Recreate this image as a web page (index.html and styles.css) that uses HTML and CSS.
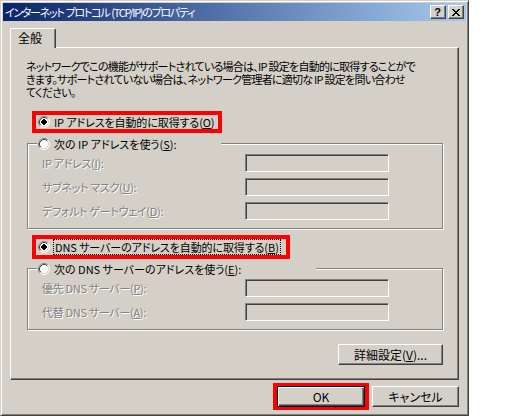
FILE: index.html
```html
<!DOCTYPE html>
<html lang="ja">
<head>
<meta charset="utf-8">
<title>インターネット プロトコル (TCP/IP)のプロパティ</title>
<link rel="stylesheet" href="styles.css">
</head>
<body>
<svg class="defs" width="0" height="0" aria-hidden="true">
  <defs>
    <symbol id="radio-off" viewBox="0 0 12 12">
      <circle cx="6" cy="6" r="5" fill="#fff"/>
      <path d="M2.11 9.89A5.5 5.5 0 0 1 9.89 2.11" fill="none" stroke="#808080"/>
      <path d="M9.89 2.11A5.5 5.5 0 0 1 2.11 9.89" fill="none" stroke="#fff"/>
      <path d="M2.82 9.18A4.5 4.5 0 0 1 9.18 2.82" fill="none" stroke="#404040"/>
      <path d="M9.18 2.82A4.5 4.5 0 0 1 2.82 9.18" fill="none" stroke="#d4d0c8"/>
    </symbol>
    <symbol id="radio-on" viewBox="0 0 12 12">
      <use href="#radio-off"/>
      <rect x="4" y="4" width="4" height="4" fill="#000"/>
      <rect x="5" y="3" width="2" height="6" fill="#000"/>
      <rect x="3" y="5" width="6" height="2" fill="#000"/>
    </symbol>
  </defs>
</svg>

<div class="dialog">
  <div class="titlebar">
    <span class="title">インターネット プロトコル (TCP/IP)のプロパティ</span>
    <div class="caption-buttons">
      <span class="cap-btn help">?</span>
      <span class="cap-btn close">
        <svg width="8" height="7" viewBox="0 0 8 7" shape-rendering="crispEdges"><path d="M0 0h2v1h-2z M6 0h2v1h-2z M1 1h2v1h-2z M5 1h2v1h-2z M2 2h4v1h-4z M3 3h2v1h-2z M2 4h4v1h-4z M1 5h2v1h-2z M5 5h2v1h-2z M0 6h2v1h-2z M6 6h2v1h-2z" fill="#000"/></svg>
      </span>
    </div>
  </div>

  <div class="content">
    <div class="tabs">
      <div class="tab">全般</div>
    </div>

    <div class="panel">
      <p class="desc">ネットワークでこの機能がサポートされている場合は、IP 設定を自動的に取得することがで<br>きます。サポートされていない場合は、ネットワーク管理者に適切な IP 設定を問い合わせ<br>てください。</p>

      <div class="mark mark-ip">
        <svg class="radio" width="12" height="12"><use href="#radio-on"/></svg>
        <span class="opt">IP アドレスを自動的に取得する(<u>O</u>)</span>
      </div>

      <div class="group group-ip">
        <div class="legend legend-ip">
          <svg class="radio" width="12" height="12"><use href="#radio-off"/></svg>
          <span>次の IP アドレスを使う(<u>S</u>):</span>
        </div>
        <div class="fields">
          <div class="field"><span class="lbl">IP アドレス(<u>I</u>):</span><span class="input"></span></div>
          <div class="field"><span class="lbl">サブネット マスク(<u>U</u>):</span><span class="input"></span></div>
          <div class="field"><span class="lbl">デフォルト ゲートウェイ(<u>D</u>):</span><span class="input"></span></div>
        </div>
      </div>

      <div class="mark mark-dns">
        <svg class="radio" width="12" height="12"><use href="#radio-on"/></svg>
        <span class="opt focus">DNS サーバーのアドレスを自動的に取得する(<u>B</u>)</span>
      </div>

      <div class="group group-dns">
        <div class="legend legend-dns">
          <svg class="radio" width="12" height="12"><use href="#radio-off"/></svg>
          <span>次の DNS サーバーのアドレスを使う(<u>E</u>):</span>
        </div>
        <div class="fields">
          <div class="field"><span class="lbl">優先 DNS サーバー(<u>P</u>):</span><span class="input"></span></div>
          <div class="field"><span class="lbl">代替 DNS サーバー(<u>A</u>):</span><span class="input"></span></div>
        </div>
      </div>

      <button class="btn adv">詳細設定(<u>V</u>)...</button>
    </div>

    <div class="footer">
      <span class="ok-mark"><button class="btn default">OK</button></span>
      <button class="btn cancel">キャンセル</button>
    </div>
  </div>
</div>
</body>
</html>
```

FILE: styles.css
```css
* {
  box-sizing: border-box;
}

html,
body {
  margin: 0;
  background: #fff;
}

body {
  font-family: "Noto Sans CJK JP", "Noto Sans", sans-serif;
  font-size: 11px;
  color: #000;
  font-feature-settings: "palt";
}

.defs {
  position: absolute;
  width: 0;
  height: 0;
  overflow: hidden;
}

.dialog {
  width: 469px;
  height: 416px;
  background: #d4d0c8;
  border: 1px solid;
  border-color: #d4d0c8 #404040 #404040 #d4d0c8;
  box-shadow: inset 1px 1px 0 #fff, inset -1px -1px 0 #808080;
  padding: 2px;
  display: flex;
  flex-direction: column;
}

/* title bar */
.titlebar {
  height: 18px;
  background: linear-gradient(to right, #0a246a, #a6caf0);
  display: flex;
  align-items: center;
  justify-content: space-between;
  padding: 0 2px 0 2px;
}

.title {
  color: #fff;
  font-size: 11px;
  letter-spacing: -1.3px;
  word-spacing: 1px;
  line-height: 14px;
  white-space: nowrap;
}

.caption-buttons {
  display: flex;
  gap: 2px;
}

.cap-btn {
  width: 16px;
  height: 14px;
  background: #d4d0c8;
  border: 1px solid;
  border-color: #fff #404040 #404040 #fff;
  box-shadow: inset -1px -1px 0 #808080;
  display: flex;
  align-items: center;
  justify-content: center;
}

.cap-btn.help {
  font-family: "Liberation Sans", sans-serif;
  font-weight: bold;
  font-size: 11px;
  line-height: 1;
  padding-right: 1px;
}

.cap-btn.close svg {
  display: block;
  margin-top: 1px;
}

/* content */
.content {
  padding: 0 7px;
  display: flex;
  flex-direction: column;
}

.tabs {
  display: flex;
  margin-top: 7px;
}

.tab {
  position: relative;
  z-index: 1;
  width: 46px;
  height: 20px;
  margin-bottom: -1px;
  background: #d4d0c8;
  border-top: 1px solid #fff;
  border-left: 1px solid #fff;
  border-right: 1px solid #404040;
  box-shadow: inset -1px 0 0 #808080;
  border-radius: 2px 2px 0 0;
  padding: 2px 0 0 7px;
  font-size: 12px;
  line-height: 14px;
}

.panel {
  height: 333px;
  border: 1px solid;
  border-color: #fff #404040 #404040 #fff;
  box-shadow: inset -1px -1px 0 #808080;
  padding: 12px 15px 0 15px;
  display: flex;
  flex-direction: column;
  align-items: flex-start;
}

.desc {
  margin: 0;
  line-height: 13px;
  letter-spacing: -0.75px;
  white-space: nowrap;
}

.radio {
  display: block;
  flex: none;
}

/* red annotation boxes */
.mark {
  border: 4px solid #f00;
  display: flex;
  align-items: center;
  gap: 4px;
  padding-left: 2px;
  margin-left: 6px;
  white-space: nowrap;
}

.mark-ip {
  margin-top: 12px;
  width: 190px;
  height: 22px;
}

.mark-dns {
  margin-top: 6px;
  width: 258px;
  height: 24px;
  gap: 3px;
}

.opt {
  line-height: 14px;
  letter-spacing: -0.1px;
}

.opt.focus {
  border: 1px dotted #000;
  padding: 0 1px;
  line-height: 14px;
}

/* group boxes */
.group {
  align-self: stretch;
  margin-left: 1px;
  border: 1px solid #808080;
  box-shadow: inset 1px 1px 0 #fff, 1px 1px 0 #fff;
  padding: 0 0 8px 14px;
  display: flex;
  flex-direction: column;
}

.group-ip {
  margin-top: 10px;
}

.group-dns {
  margin-top: 9px;
}

.legend {
  height: 16px;
  margin-top: -8px;
  margin-left: -5px;
  padding-left: 1px;
  background: #d4d0c8;
  display: flex;
  align-items: center;
  gap: 4px;
  white-space: nowrap;
}

.legend-ip {
  width: 184px;
}

.legend-dns {
  width: 279px;
}

.fields {
  margin-top: 2px;
  display: flex;
  flex-direction: column;
  gap: 6px;
}

.field {
  display: flex;
  align-items: center;
  height: 18px;
}

.lbl {
  width: 203px;
  color: #808080;
  text-shadow: 1px 1px 0 #fff;
  letter-spacing: -0.3px;
  white-space: nowrap;
}

.input {
  width: 144px;
  height: 18px;
  background: #d4d0c8;
  border: 1px solid;
  border-color: #808080 #fff #fff #808080;
  box-shadow: inset 1px 1px 0 #404040, inset -1px -1px 0 #d4d0c8;
}

/* buttons */
.btn {
  font-family: inherit;
  font-size: 12px;
  font-feature-settings: "palt";
  color: #000;
  background: #d4d0c8;
  border: 1px solid;
  border-color: #fff #404040 #404040 #fff;
  box-shadow: inset -1px -1px 0 #808080;
  padding: 0;
  height: 21px;
  line-height: 14px;
  display: flex;
  align-items: center;
  justify-content: center;
}

.adv {
  align-self: flex-end;
  width: 105px;
  margin-top: 14px;
}

.footer {
  margin-top: 3px;
  display: flex;
  justify-content: flex-end;
  align-items: center;
  gap: 3px;
}

.ok-mark {
  border-style: solid;
  border-color: #f00;
  border-width: 3px 4px;
  display: flex;
}

.btn.default {
  width: 88px;
  border: 1px solid #000;
  box-shadow: inset 1px 1px 0 #fff, inset -1px -1px 0 #404040, inset -2px -2px 0 #808080;
}

.btn.cancel {
  width: 87px;
}
```
